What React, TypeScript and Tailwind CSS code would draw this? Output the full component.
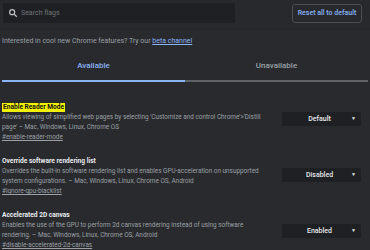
import React from "react";

const font = { fontFamily: "Roboto, 'Liberation Sans', sans-serif" };

function Select({ label }: { label: string }) {
  return (
    <div className="w-[79px] h-[14px] bg-[#1f2023] flex items-center justify-between pl-[6px] pr-[5px] text-[7px] font-medium text-[#e8eaed]">
      <span className="flex-1 text-center">{label}</span>
      <span className="text-[5px] text-[#e8eaed]">▼</span>
    </div>
  );
}

function Flag({
  title,
  highlight,
  lines,
  link,
  value,
  selectOffset,
}: {
  title: string;
  highlight?: boolean;
  lines: string[];
  link: string;
  value: string;
  selectOffset: string;
}) {
  return (
    <div className="flex pl-[2px] pr-[9px]">
      <div className="flex-1 flex flex-col">
        <div className="h-[10px] flex items-center">
          <span
            className={
              "text-[6.6px] font-bold leading-[9px] " +
              (highlight ? "bg-[#f5f200] text-[#111] px-[1px]" : "text-[#e8eaed]")
            }
          >
            {title}
          </span>
        </div>
        {lines.map((l, i) => (
          <div key={i} className="text-[6.4px] leading-[10px] text-[#9aa0a6] whitespace-nowrap">
            {l}
          </div>
        ))}
        <div className="text-[6.4px] leading-[10px] text-[#9aa0a6] underline whitespace-nowrap">{link}</div>
      </div>
      <div className={selectOffset}>
        <Select label={value} />
      </div>
    </div>
  );
}

export default function App() {
  return (
    <div className="w-[370px] h-[250px] bg-[#292a2d] overflow-hidden" style={font}>
      <div className="h-[30px] bg-[#28292c] flex items-start pt-[3px] pl-[3px] pr-[8px] border-b border-[#26272a]">
        <div className="w-[232px] h-[20px] bg-[#1f2023] flex items-center pl-[5px] gap-[3px]">
          <svg width="10" height="10" viewBox="0 0 24 24" fill="none" stroke="#bdc1c6" strokeWidth="3">
            <circle cx="10" cy="10" r="6" />
            <path d="M15 15l6 6" />
          </svg>
          <span className="text-[7px] text-[#6f7377]">Search flags</span>
        </div>
        <div className="flex-1" />
        <div className="mt-[1px] w-[70px] h-[19px] rounded-[3px] border border-[#4a4d51] flex items-center justify-center text-[7px] font-medium text-[#8ab4f8]">
          Reset all to default
        </div>
      </div>
      <div className="pl-[2px] pt-[6px] text-[7px] text-[#9aa0a6] h-[20px] leading-[10px]">
        Interested in cool new Chrome features? Try our{" "}
        <span className="text-[#8ab4f8] underline">beta channel</span>
      </div>
      <div className="mx-[2px] mt-[10px] flex">
        <div className="flex-1 flex flex-col items-center">
          <div className="text-[8px] font-medium text-[#8ab4f8] h-[11px] leading-[11px]">Available</div>
          <div className="mt-[9px] h-[2px] w-full bg-[#8ab4f8]" />
        </div>
        <div className="flex-1 flex flex-col items-center">
          <div className="text-[8px] font-medium text-[#9aa0a6] h-[11px] leading-[11px]">Unavailable</div>
          <div className="mt-[9px] h-[2px] w-full bg-[#5f6368]" />
        </div>
      </div>
      <div className="mt-[20px] flex flex-col gap-[14px]">
        <Flag
          title="Enable Reader Mode"
          highlight
          lines={[
            "Allows viewing of simplified web pages by selecting 'Customize and control Chrome'>'Distill",
            "page' – Mac, Windows, Linux, Chrome OS",
          ]}
          link="#enable-reader-mode"
          value="Default"
          selectOffset="pt-[10px]"
        />
        <Flag
          title="Override software rendering list"
          lines={[
            "Overrides the built-in software rendering list and enables GPU-acceleration on unsupported",
            "system configurations. – Mac, Windows, Linux, Chrome OS, Android",
          ]}
          link="#ignore-gpu-blacklist"
          value="Disabled"
          selectOffset="pt-[12px]"
        />
        <Flag
          title="Accelerated 2D canvas"
          lines={[
            "Enables the use of the GPU to perform 2d canvas rendering instead of using software",
            "rendering. – Mac, Windows, Linux, Chrome OS, Android",
          ]}
          link="#disable-accelerated-2d-canvas"
          value="Enabled"
          selectOffset="pt-[14px]"
        />
      </div>
    </div>
  );
}
